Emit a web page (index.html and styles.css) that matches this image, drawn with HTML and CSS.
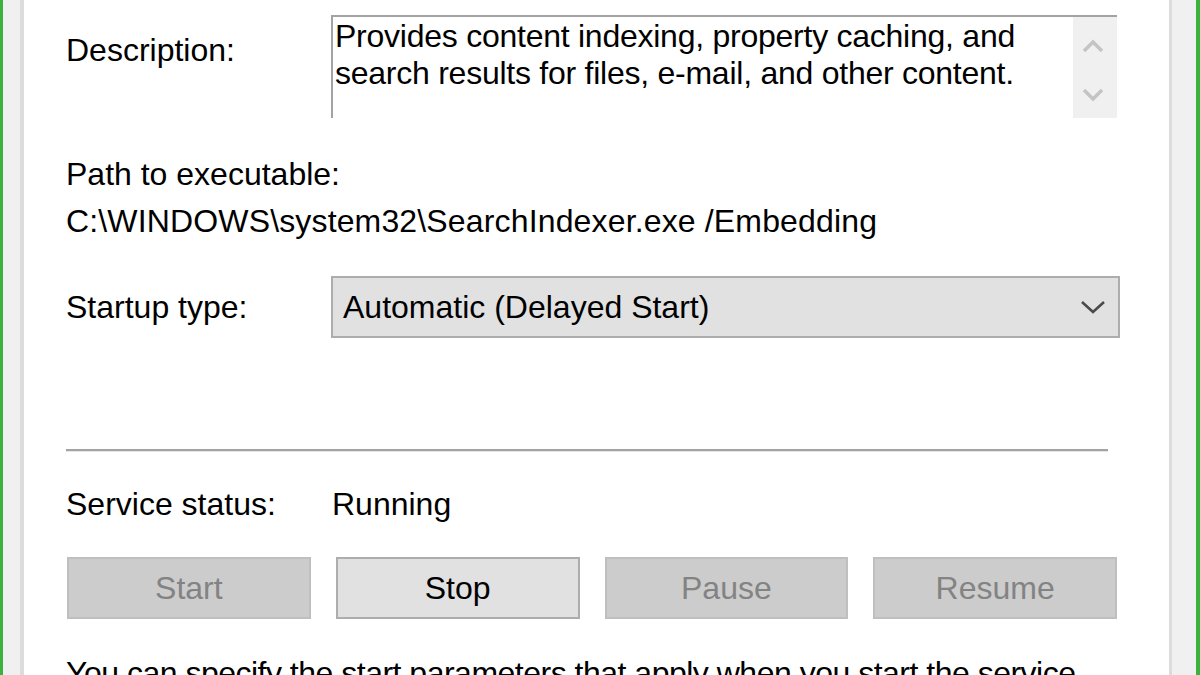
FILE: index.html
```html
<!DOCTYPE html>
<html>
<head>
<meta charset="utf-8">
<link rel="stylesheet" href="styles.css">
</head>
<body>
<div class="window">
  <div class="tab">
    <div class="desc-row">
      <div class="label desc-label">Description:</div>
      <div class="textbox">
        <div class="textbox-text">Provides content indexing, property caching, and<br>search results for files, e-mail, and other content.</div>
        <div class="scrollbar">
          <svg class="scroll-arrow" width="22" height="14" viewBox="0 0 22 14"><polyline points="2,12 11,3 20,12" fill="none" stroke="#c4c4c4" stroke-width="3.5"/></svg>
          <svg class="scroll-arrow" width="22" height="14" viewBox="0 0 22 14"><polyline points="2,2 11,11 20,2" fill="none" stroke="#c4c4c4" stroke-width="3.5"/></svg>
        </div>
      </div>
    </div>

    <div class="path-block">
      <div class="label">Path to executable:</div>
      <div class="path-value">C:\WINDOWS\system32\SearchIndexer.exe /Embedding</div>
    </div>

    <div class="startup-row">
      <div class="label col-label">Startup type:</div>
      <div class="dropdown">
        <span class="dropdown-text">Automatic (Delayed Start)</span>
        <svg class="dropdown-arrow" width="26" height="16" viewBox="0 0 26 16"><polyline points="2,3 13,13 24,3" fill="none" stroke="#4a4a4a" stroke-width="2.6"/></svg>
      </div>
    </div>

    <div class="separator"></div>

    <div class="status-row">
      <div class="label col-label">Service status:</div>
      <div class="status-value">Running</div>
    </div>

    <div class="buttons">
      <div class="btn disabled">Start</div>
      <div class="btn">Stop</div>
      <div class="btn disabled">Pause</div>
      <div class="btn disabled">Resume</div>
    </div>

    <div class="help">You can specify the start parameters that apply when you start the service from here.</div>
  </div>
</div>
</body>
</html>
```

FILE: styles.css
```css
* {
  box-sizing: border-box;
}

html, body {
  margin: 0;
  padding: 0;
  height: 675px;
  overflow: hidden;
  background: #f0f0f0;
}

body {
  font-family: "Liberation Sans", Arial, sans-serif;
  font-size: 32px;
  line-height: 37px;
  color: #000;
}

.window {
  height: 675px;
  display: flex;
  background: #f0f0f0;
  border-left: 3px solid #3bb23d;
  border-right: 4px solid #3bb23d;
  padding-left: 17px;
  padding-right: 24px;
}

.tab {
  flex: 1;
  background: #fff;
  border-left: 4px solid #dcdcdc;
  border-right: 3px solid #dcdcdc;
  padding: 15px 52px 0 42px;
  overflow: hidden;
}

.label {
  white-space: nowrap;
}

.desc-row {
  display: flex;
}

.desc-label {
  width: 265px;
  flex: none;
  margin-top: 17px;
}

.textbox {
  flex: 1;
  height: 103px;
  display: flex;
  border-top: 2px solid #a3a3a3;
  border-left: 2px solid #a3a3a3;
}

.textbox-text {
  flex: 1;
  padding: 1px 0 0 2px;
  white-space: nowrap;
  overflow: hidden;
  letter-spacing: -0.25px;
}

.scrollbar {
  width: 44px;
  flex: none;
  background: #f0f0f0;
  display: flex;
  flex-direction: column;
  align-items: center;
  justify-content: space-between;
  padding: 22px 0 16px;
}

.scroll-arrow {
  display: block;
  margin-right: 4px;
}

.path-block {
  margin-top: 33px;
  line-height: 47px;
}

.path-value {
  white-space: nowrap;
  letter-spacing: 0.15px;
}

.startup-row {
  margin-top: 31px;
  display: flex;
  align-items: center;
  margin-right: -3px;
}

.col-label {
  width: 265px;
  flex: none;
}

.dropdown {
  flex: 1;
  height: 62px;
  background: #e1e1e1;
  border: 2px solid #adadad;
  display: flex;
  align-items: center;
  justify-content: space-between;
  padding: 0 12px 0 10px;
}

.dropdown-arrow {
  display: block;
}

.separator {
  margin-top: 111px;
  margin-right: 9px;
  border-top: 2px solid #a3a3a3;
  border-bottom: 1px solid #e6e6e6;
}

.status-row {
  margin-top: 34px;
  display: flex;
}

.status-value {
  padding-left: 1px;
}

.buttons {
  margin-top: 34px;
  margin-left: 1px;
  display: grid;
  grid-template-columns: repeat(4, 1fr);
  column-gap: 25px;
}

.btn {
  height: 62px;
  display: flex;
  align-items: center;
  justify-content: center;
  background: #e1e1e1;
  border: 2px solid #adadad;
}

.btn.disabled {
  background: #cccccc;
  border-color: #bfbfbf;
  color: #838383;
}

.help {
  margin-top: 36px;
  letter-spacing: -0.5px;
}
```
